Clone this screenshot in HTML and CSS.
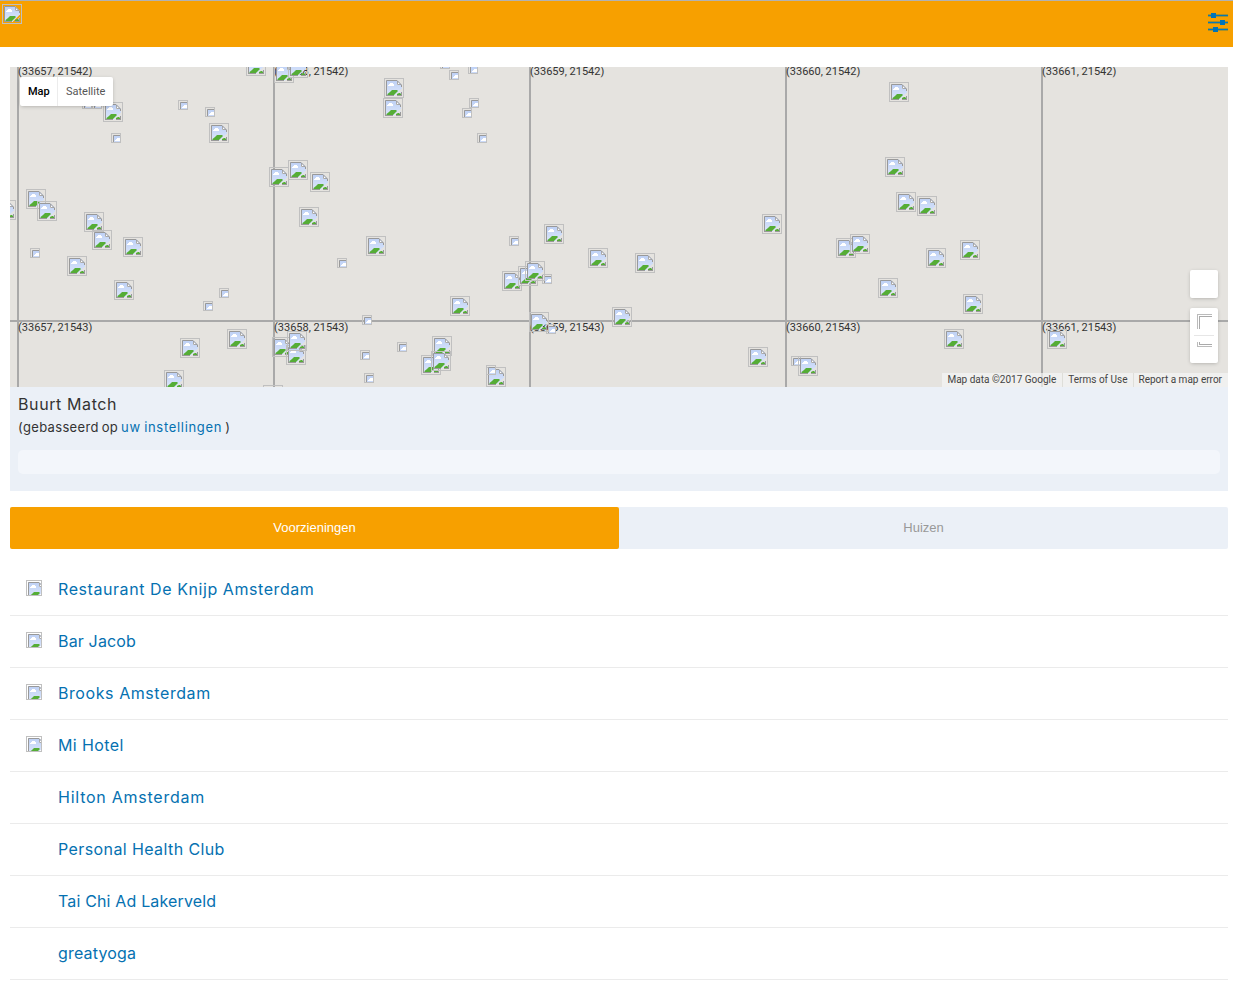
FILE: index.html
```html
<!DOCTYPE html>
<html lang="nl">
<head>
<meta charset="utf-8">
<title>Buurt Match</title>
<link rel="stylesheet" href="styles.css">
</head>
<body>
<svg class="defs" aria-hidden="true">
  <defs>
    <linearGradient id="sky" x1="0" y1="0" x2="0" y2="1"><stop offset="0" stop-color="#bdd0f5"/><stop offset="1" stop-color="#dde7fb"/></linearGradient>
    <symbol id="broken" viewBox="0 0 16 16">
      <path d="M0 0H11L16 5V8.500L8.500 16H0Z" fill="url(#sky)"/>
      <path d="M16 11V16H11Z" fill="#d5e0f8"/>
      <path d="M2 6V5H3V4H4V3H7V4H8V6Z" fill="#fff"/>
      <path d="M1.500 15V14L4 12L6 10H11L12 11L8 15ZM11 15V14L13 13H14L15 14V15Z" fill="#55ad36"/>
      <path d="M.5 16V.5H11M0 15.500H8M11 15.500H16M15.500 16V12" fill="none" stroke="#999"/>
      <path d="M11 1L15 5H11Z" fill="#fff"/>
      <path d="M11.500 1V4.500H15" fill="none" stroke="#aaa"/>
      <path d="M11 .5L15.500 5V7" fill="none" stroke="#999"/>
    </symbol>
  </defs>
</svg>
<header class="topbar">
  <span class="broken logo"><svg><use href="#broken"/></svg></span>
  <svg class="settings" width="22" height="22" viewBox="0 0 22 22">
    <path d="M1 4.500H21M1 11.500H21M1 18.500H21" stroke="#55805a" stroke-width="2"/>
    <path d="M1 4.500H21M1 11.500H21M1 18.500H21" stroke="#0878b5" stroke-width="1"/>
    <path d="M4 2H9V7H4ZM13 9H18V14H13ZM6 16H11V21H6Z" fill="#0074b8"/>
  </svg>
</header>
<main class="page">
  <section class="map">
    <div class="tiles" id="tiles"></div>
    <div class="pins" id="pins"></div>
    <div class="maptype"><span class="on">Map</span><span>Satellite</span></div>
    <div class="pegman"></div>
    <div class="zoomer"><i class="plus"></i><i class="minus"></i></div>
    <div class="credits"><span>Map data ©2017 Google</span><span>Terms of Use</span><span>Report a map error</span></div>
  </section>
  <section class="match">
    <h1>Buurt Match</h1>
    <p>(gebasseerd op <a>uw instellingen</a> )</p>
    <div class="bar"></div>
  </section>
  <nav class="tabs"><button class="active">Voorzieningen</button><button>Huizen</button></nav>
  <ul class="places">
    <li><span class="broken thumb"><svg><use href="#broken"/></svg></span><a class="wide">Restaurant De Knijp Amsterdam</a></li>
    <li><span class="broken thumb"><svg><use href="#broken"/></svg></span><a class="tight">Bar Jacob</a></li>
    <li><span class="broken thumb"><svg><use href="#broken"/></svg></span><a class="wide">Brooks Amsterdam</a></li>
    <li><span class="broken thumb"><svg><use href="#broken"/></svg></span><a>Mi Hotel</a></li>
    <li><span class="thumb"></span><a class="wider">Hilton Amsterdam</a></li>
    <li><span class="thumb"></span><a>Personal Health Club</a></li>
    <li><span class="thumb"></span><a class="tight">Tai Chi Ad Lakerveld</a></li>
    <li><span class="thumb"></span><a class="tight">greatyoga</a></li>
  </ul>
</main>
<script src="map.js"></script>
</body>
</html>
```
FILE: styles.css
```css
* { box-sizing: border-box; }
body { margin: 0; background: #fff; color: #333; font-family: Inter, "Open Sans", sans-serif; overflow: hidden; }
.defs { position: absolute; width: 0; height: 0; }
.topbar { height: 47px; background: #f7a000; border-top: 1px solid #b2b2b2; padding: 3px 4px 0 2px; display: flex; justify-content: space-between; }
.settings { margin-top: 7px; }
.broken { display: block; width: 20px; height: 20px; border: 1px solid #c0c0c0; overflow: hidden; padding: 1px; }
.broken svg { display: block; width: 16px; height: 16px; }
.page { padding: 20px 5px 0 10px; }
.map { position: relative; height: 320px; overflow: hidden; background: #e5e3df; font-family: Roboto, sans-serif; }
.tiles { position: absolute; left: -248px; top: -2px; width: 1536px; display: grid; grid-template-columns: repeat(6, 256px); grid-auto-rows: 256px; }
.tile { border: 1px solid #a9a9a9; font-size: 11px; line-height: 13px; color: #333; }
.tile span { display: block; margin-left: -1px; margin-top: -1px; }
.pins { position: absolute; left: -10px; top: -67px; }
.pins .broken { position: absolute; }
.pins .small { width: 10px; height: 10px; }
.maptype { position: absolute; left: 10px; top: 10px; height: 29px; display: flex; background: #fff; border-radius: 2px; box-shadow: 0 1px 4px -1px rgba(0,0,0,.3); font-size: 11px; line-height: 29px; color: #565656; }
.maptype span { padding: 0 8px; width: 55px; }
.maptype .on { width: 38px; color: #000; font-weight: 500; border-right: 1px solid #ececec; }
.pegman, .zoomer { position: absolute; left: 1180px; width: 28px; background: #fff; border-radius: 2px; box-shadow: 0 1px 4px -1px rgba(0,0,0,.3); }
.pegman { top: 203px; height: 28px; }
.zoomer { top: 241px; height: 55px; padding: 6px 4px 0; }
.zoomer i { display: block; position: relative; height: 15px; margin: 0 2px 0 3px; border: solid #bbb; }
.zoomer i::after { content: ""; position: absolute; inset: 1px 0 0 1px; border: solid #aaa; }
.zoomer .plus, .zoomer .plus::after { border-width: 1px 0 0 1px; }
.zoomer .minus { height: 5px; margin-top: 13px; border-width: 0 0 1px 1px; }
.zoomer .minus::after { inset: 0 0 1px 1px; border-width: 0 0 1px 1px; }
.zoomer::after { content: ""; position: absolute; left: 4px; top: 27px; width: 20px; height: 1px; background: #e6e6e6; }
.credits { position: absolute; right: 0; bottom: 0; height: 14px; display: flex; font-size: 10px; line-height: 14px; color: #444; background: rgba(245,245,245,.7); white-space: nowrap; }
.credits span { padding: 0 6px 0 5px; }
.credits span + span { border-left: 1px solid #deded9; }
.credits span:nth-child(2) { padding-right: 5px; }
.match { height: 104px; background: #ebf0f7; padding: 7px 8px 0; }
.match h1 { margin: 0; font-size: 16px; font-weight: 400; line-height: 20px; letter-spacing: .6px; }
.match p { margin: 4px 0 0; font-size: 13px; line-height: 18px; letter-spacing: .33px; word-spacing: -1px; }
.match a { letter-spacing: .69px; }
.match a, .places a { color: #0571b1; }
.bar { height: 24px; margin-top: 14px; border-radius: 5px; background: #f3f6fb; }
.tabs { display: flex; margin-top: 16px; height: 42px; background: #ebf0f7; border-radius: 2px; }
.tabs button { flex: 1; border: 0; border-radius: 2px; background: none; font: 13px "Liberation Sans", sans-serif; color: #999; padding: 0 0 2px; }
.tabs .active { background: #f7a000; color: #fff; }
.places { list-style: none; margin: 15px 0 0; padding: 0; }
.places li { height: 52px; border-bottom: 1px solid #ebebeb; padding: 16px 16px 0; display: flex; gap: 16px; }
.thumb { width: 16px; height: 16px; flex: none; }
.places a { font-size: 16px; line-height: 19px; letter-spacing: .4px; }
.places .wide { letter-spacing: .57px; }
.places .wider { letter-spacing: .75px; }
.places .tight { letter-spacing: .16px; }
```
FILE: map.js
```js
const tiles = document.getElementById('tiles');
for (let y = 21542; y < 21544; y++) {
  for (let x = 33656; x < 33662; x++) {
    const t = document.createElement('div');
    t.className = 'tile';
    if (x > 33656) t.innerHTML = `<span>(${x}, ${y})</span>`;
    tiles.append(t);
  }
}
const large = [[103,102],[209,123],[246,56],[274,63],[288,58],[384,78],[383,98],[269,167],[288,160],[310,172],[299,207],
[26,189],[37,201],[-4,200],[84,212],[92,230],[123,237],[67,256],[114,280],[227,329],[180,338],[164,370],[366,236],
[502,271],[450,296],[272,337],[286,345],[287,331],[432,336],[421,355],[431,351],[486,367],[263,385],[544,224],[588,248],
[635,253],[518,266],[525,261],[529,312],[612,307],[762,214],[836,238],[850,234],[926,248],[960,240],[878,278],[963,294],
[944,329],[748,347],[798,356],[896,192],[917,196],[885,157],[889,82],[1047,329]];
const small = [[82,99],[92,99],[178,100],[205,107],[111,133],[440,59],[449,70],[468,64],[469,98],[462,108],[477,133],[30,248],
[219,288],[203,301],[337,258],[362,315],[509,236],[360,350],[397,342],[364,373],
[542,274],[546,324],[791,356]];
const pins = document.getElementById('pins');
function place(list, cls) {
  for (const [x, y] of list) {
    const p = document.createElement('span');
    p.className = 'broken ' + cls;
    p.style.left = x + 'px';
    p.style.top = y + 'px';
    p.innerHTML = '<svg><use href="#broken"/></svg>';
    pins.append(p);
  }
}
place(small, 'small');
place(large, 'large');
place([[486, 365]], 'small');
```
